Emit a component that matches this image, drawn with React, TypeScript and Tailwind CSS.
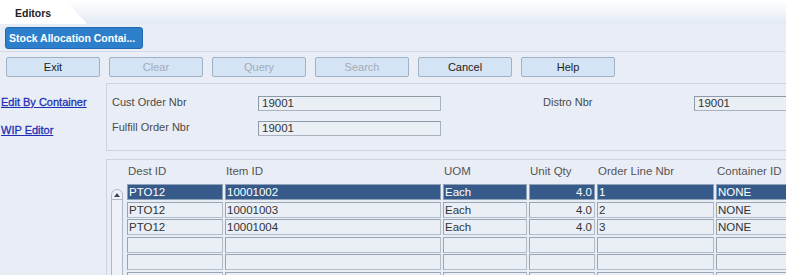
import React from "react";

const buttons = [
  { label: "Exit", enabled: true },
  { label: "Clear", enabled: false },
  { label: "Query", enabled: false },
  { label: "Search", enabled: false },
  { label: "Cancel", enabled: true },
  { label: "Help", enabled: true },
];

const columns = [
  { key: "dest", label: "Dest ID", width: "w-[96px]" },
  { key: "item", label: "Item ID", width: "w-[216px]" },
  { key: "uom", label: "UOM", width: "w-[84px]" },
  { key: "qty", label: "Unit Qty", width: "w-[66px]" },
  { key: "line", label: "Order Line Nbr", width: "w-[117px]" },
  { key: "cont", label: "Container ID", width: "w-[100px]" },
];

type Row = { dest: string; item: string; uom: string; qty: string; line: string; cont: string };

const rows: (Row | null)[] = [
  { dest: "PTO12", item: "10001002", uom: "Each", qty: "4.0", line: "1", cont: "NONE" },
  { dest: "PTO12", item: "10001003", uom: "Each", qty: "4.0", line: "2", cont: "NONE" },
  { dest: "PTO12", item: "10001004", uom: "Each", qty: "4.0", line: "3", cont: "NONE" },
  null,
  null,
  null,
];

function Field({ value, width }: { value: string; width: string }) {
  return (
    <div
      className={`${width} h-[15px] border border-[#a9b3bf] border-t-[#8f9aa7] border-l-[#8f9aa7] bg-[#eaeff6] pl-[3px] text-[11.5px] leading-[13px] text-[#333]`}
    >
      {value}
    </div>
  );
}

export default function App() {
  return (
    <div
      className="w-[786px] h-[275px] overflow-hidden bg-[#e9eef6] text-[11px] text-[#4a4a4a]"
      style={{ fontFamily: '"Liberation Sans", Arial, sans-serif' }}
    >
      {/* Tab bar */}
      <div className="h-[24px] flex bg-gradient-to-b from-white to-[#e3eaf4]">
        <div className="relative h-[24px] w-[86px] flex-none">
          <svg className="absolute inset-0" width="86" height="24" viewBox="0 0 86 24">
            <path d="M0 0 H62 C70 0 72 10 86 22 V24 H0 Z" fill="#ffffff" />
          </svg>
          <span className="relative block pl-[15px] pt-[6px] text-[10.5px] font-bold text-[#222]">Editors</span>
        </div>
      </div>

      {/* Title button */}
      <div className="h-[28px] px-[5px] pt-[3px] border-b border-[#d3dce8]">
        <div className="w-[138px] h-[22px] rounded-[3px] bg-[#2d7fcb] border border-[#2369b0] pl-[3px] text-[10.5px] leading-[20px] font-bold text-white">
          Stock Allocation Contai...
        </div>
      </div>

      {/* Toolbar */}
      <div className="h-[31px] flex gap-[9px] pl-[6px] pt-[5px]">
        {buttons.map((b) => (
          <div
            key={b.label}
            className={`w-[94px] h-[20px] rounded-[2px] border border-[#9fb1c5] bg-[#d4e4f5] text-center text-[11px] leading-[18px] ${
              b.enabled ? "text-[#222]" : "text-[#a3abb5]"
            }`}
          >
            {b.label}
          </div>
        ))}
      </div>

      {/* Main */}
      <div className="flex">
        <div className="w-[106px] flex-none pl-[1px] pt-[13px] flex flex-col gap-[15px]">
          <span className="text-[11px] leading-[13px] text-[#1f2fb5] underline [-webkit-text-stroke:0.3px_#1f2fb5]">Edit By Container</span>
          <span className="text-[11px] leading-[13px] text-[#1f2fb5] underline [-webkit-text-stroke:0.3px_#1f2fb5]">WIP Editor</span>
        </div>

        <div className="flex-1 flex flex-col">
          {/* Form panel */}
          <div className="flex-none h-[68px] border-l border-t border-b border-[#cbd5e1] pl-[5px] pt-[12px] flex">
            <div className="flex flex-col gap-[10px]">
              <div className="flex items-center h-[15px]">
                <span className="w-[146px] -mt-[2px]">Cust Order Nbr</span>
                <Field value="19001" width="w-[183px]" />
              </div>
              <div className="flex items-center h-[15px]">
                <span className="w-[146px] -mt-[2px]">Fulfill Order Nbr</span>
                <Field value="19001" width="w-[183px]" />
              </div>
            </div>
            <div className="flex items-center h-[15px] pl-[102px]">
              <span className="w-[151px] -mt-[2px]">Distro Nbr</span>
              <Field value="19001" width="w-[120px]" />
            </div>
          </div>

          {/* Table panel */}
          <div className="flex-none mt-[8px] h-[140px] border-l border-t border-[#cbd5e1] flex">
            <div className="w-[20px] flex-none pl-[4px] pt-[29px]">
              <div className="w-[12px] h-[110px] rounded-t-[6px] border border-[#aeb9c7] bg-[#eef2f8]">
                <div className="h-[10px] border-b border-[#aeb9c7] flex items-center justify-center">
                  <svg width="6" height="4" viewBox="0 0 6 4">
                    <path d="M0 4 L3 0 L6 4 Z" fill="#444" />
                  </svg>
                </div>
              </div>
            </div>
            <div className="flex-1 flex flex-col">
              <div className="flex-none h-[24px] flex gap-[2px] items-center">
                {columns.map((c) => (
                  <div key={c.key} className={`${c.width} flex-none pl-[1px] text-[11.5px] text-[#555]`}>
                    {c.label}
                  </div>
                ))}
              </div>
              <div className="flex-none flex flex-col gap-[1.5px]">
                {rows.map((r, i) => {
                  const sel = i === 0;
                  return (
                    <div key={i} className="flex-none flex gap-[2px]">
                      {columns.map((c) => (
                        <div
                          key={c.key}
                          className={`${c.width} flex-none h-[16px] border text-[11.5px] leading-[14px] whitespace-nowrap overflow-hidden ${
                            c.key === "qty" ? "text-right pr-[2px]" : "pl-[1px]"
                          } ${
                            sel
                              ? "bg-[#365b8b] border-[#8fa1b8] text-white"
                              : "bg-[#eaeff6] border-[#b3bdc9] border-t-[#9aa5b2] border-l-[#9aa5b2] text-[#333]"
                          }`}
                        >
                          {r ? (r as Row)[c.key as keyof Row] : ""}
                        </div>
                      ))}
                    </div>
                  );
                })}
              </div>
            </div>
          </div>
        </div>
      </div>
    </div>
  );
}
